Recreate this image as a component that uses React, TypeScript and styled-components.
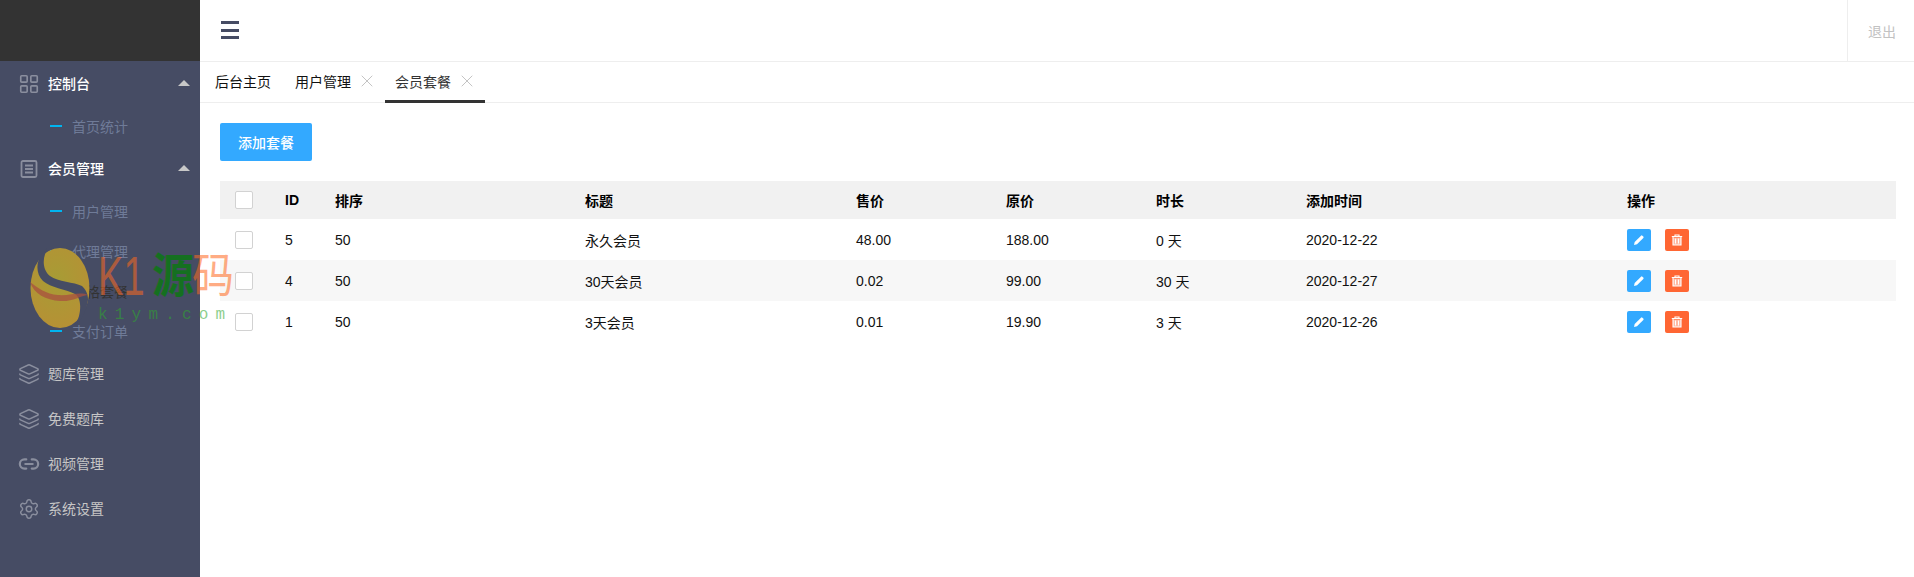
import { ReactNode } from "react";
import styled, { createGlobalStyle } from "styled-components";
import { Layers, LayoutGrid, Link2, Settings, X } from "lucide-react";

const GlobalStyle = createGlobalStyle`
  html, body {
    margin: 0;
    padding: 0;
    background: #fff;
  }
  body {
    font-family: "Liberation Sans", "Noto Sans CJK SC", sans-serif;
    font-size: 14px;
    color: #333;
    overflow: hidden;
  }
`;

const Page = styled.div`
  position: relative;
  display: flex;
  height: 577px;
  overflow: hidden;
`;

const Sidebar = styled.aside`
  width: 200px;
  flex-shrink: 0;
  background: #464c64;
`;

const Logo = styled.div`
  height: 61px;
  background: #333;
`;

const MenuItem = styled.div<{ $open?: boolean }>`
  display: flex;
  align-items: center;
  box-sizing: border-box;
  height: 45px;
  padding: 0 10px 1px 20px;
  color: ${(p) => (p.$open ? "#fff" : "#c6c6c6")};
  font-weight: ${(p) => (p.$open ? 500 : 400)};

  svg {
    width: 22px;
    height: 22px;
    margin: 1px 8px 0 -2px;
    color: #8a8e9e;
    flex-shrink: 0;
  }
`;

const Caret = styled.span`
  margin-left: auto;
  width: 0;
  height: 0;
  border-left: 6px solid transparent;
  border-right: 6px solid transparent;
  border-bottom: 6px solid #c8c8c8;
`;

const SubItem = styled.div<{ $active?: boolean }>`
  display: flex;
  align-items: center;
  box-sizing: border-box;
  height: 40px;
  padding: 0 0 1px 50px;
  color: ${(p) => (p.$active ? "#333" : "#6f7b98")};

  &::before {
    content: "";
    width: 12px;
    height: 2px;
    margin-right: 10px;
    background: #00b4f0;
  }
`;

const Main = styled.main`
  flex: 1;
  min-width: 0;
  display: flex;
  flex-direction: column;
`;

const TopBar = styled.header`
  display: flex;
  align-items: stretch;
  justify-content: space-between;
  height: 61px;
  border-bottom: 1px solid #eee;
`;

const Burger = styled.button`
  display: flex;
  flex-direction: column;
  justify-content: space-between;
  width: 18px;
  height: 18px;
  margin: 21px 0 0 21px;
  padding: 0;
  border: 0;
  background: none;

  span {
    height: 3px;
    background: #464c64;
  }
`;

const Logout = styled.div`
  display: flex;
  align-items: center;
  width: 67px;
  padding-left: 20px;
  box-sizing: border-box;
  border-left: 1px solid #eee;
  color: #c2c2c2;
`;

const Tabs = styled.nav`
  display: flex;
  height: 40px;
  padding-left: 5px;
  border-bottom: 1px solid #eee;
`;

const Tab = styled.div<{ $active?: boolean; $closable?: boolean }>`
  display: flex;
  align-items: center;
  box-sizing: border-box;
  width: ${(p) => (p.$closable ? "100px" : "80px")};
  height: 41px;
  padding-left: 10px;
  color: ${(p) => (p.$active ? "#333" : "#111")};
  border-bottom: 3px solid ${(p) => (p.$active ? "#333" : "transparent")};

  svg {
    width: 20px;
    height: 20px;
    margin-left: 6px;
    color: #c4c4c4;
  }
`;

const Content = styled.section`
  padding: 20px 18px 0 20px;
`;

const AddButton = styled.button`
  display: block;
  width: 92px;
  height: 38px;
  padding: 0;
  border: 0;
  border-radius: 2px;
  background: #33a9ff;
  color: #fff;
  font: inherit;
  font-weight: 500;
`;

const Table = styled.table`
  width: 100%;
  margin-top: 20px;
  border-collapse: collapse;
  table-layout: fixed;
  color: #111;
`;

const HeadCell = styled.th`
  height: 38px;
  padding: 0 15px;
  background: #f1f1f1;
  text-align: left;
  font-weight: 700;
  color: #000;
`;

const Cell = styled.td`
  height: 41px;
  padding: 0 15px;
`;

const Row = styled.tr`
  &:nth-child(even) {
    background: #f7f7f7;
  }
`;

const Check = styled.span`
  display: block;
  box-sizing: border-box;
  width: 18px;
  height: 18px;
  border: 1px solid #d2d2d2;
  border-radius: 2px;
  background: #fff;
`;

const Actions = styled.div`
  display: flex;
  gap: 14px;
`;

const IconButton = styled.button<{ $color: string }>`
  display: flex;
  align-items: center;
  justify-content: center;
  width: 24px;
  height: 22px;
  padding: 0;
  border: 0;
  border-radius: 2px;
  background: ${(p) => p.$color};
`;

const Watermark = styled.div`
  position: absolute;
  left: 30px;
  top: 248px;
  display: flex;
  pointer-events: none;
`;

const WatermarkText = styled.div`
  margin-left: 8px;
  display: flex;
  flex-direction: column;
`;

const Brand = styled.div`
  display: flex;
  align-items: center;
  height: 56px;
  line-height: 1;
`;

const LatinMark = styled.span`
  display: inline-block;
  width: 54px;
  font-size: 56px;
  color: #ff6a20;
  opacity: 0.55;
  transform: scaleX(0.68);
  transform-origin: left center;
`;

const CjkMark = styled.span<{ $color: string; $alpha: number; $bold?: boolean }>`
  width: 40px;
  font-size: 42px;
  font-weight: ${(p) => (p.$bold ? 700 : 400)};
  color: ${(p) => p.$color};
  opacity: ${(p) => p.$alpha};
  transform: scaleY(1.12);
`;

const Domain = styled.div`
  margin-top: 2px;
  font-family: "Liberation Mono", monospace;
  font-size: 16px;
  letter-spacing: 7.2px;
  line-height: 18px;
  color: #2fa82f;
  opacity: 0.55;
  white-space: nowrap;
`;

type Plan = {
  id: number;
  sort: number;
  title: string;
  price: string;
  original: string;
  days: string;
  date: string;
};

const plans: Plan[] = [
  { id: 5, sort: 50, title: "永久会员", price: "48.00", original: "188.00", days: "0 天", date: "2020-12-22" },
  { id: 4, sort: 50, title: "30天会员", price: "0.02", original: "99.00", days: "30 天", date: "2020-12-27" },
  { id: 1, sort: 50, title: "3天会员", price: "0.01", original: "19.90", days: "3 天", date: "2020-12-26" },
];

const columnWidths = [50, 50, 250, 271, 150, 150, 150, 321];
const columns = ["ID", "排序", "标题", "售价", "原价", "时长", "添加时间", "操作"];

function ListIcon() {
  return (
    <svg viewBox="-2 -2 22 22" fill="none" stroke="currentColor" strokeWidth="1.8">
      <rect x="1.5" y="1" width="15" height="16" rx="1.5" />
      <path d="M5 5.500h8M5 9h8M5 12.500h8" />
    </svg>
  );
}

function PencilIcon() {
  return (
    <svg width="12" height="12" viewBox="0 0 12 12" fill="#fff">
      <path d="M1 11l.7-3L8 1.700a1 1 0 0 1 1.400 0l.9.9a1 1 0 0 1 0 1.400L4 10.300z" />
    </svg>
  );
}

function TrashIcon() {
  return (
    <svg width="12" height="12" viewBox="0 0 12 12" fill="none">
      <path d="M.8 2.500h10.400M4 2.200V1h4v1.200" stroke="#fff" strokeWidth="1.100" />
      <path d="M2 3.500h8V11H2z" fill="#fff" opacity="0.55" />
      <path d="M2 3v8h8V3" stroke="#fff" strokeWidth="1.100" />
      <path d="M4.500 4.500v5M7.500 4.500v5" stroke="#fff" />
    </svg>
  );
}

function NavGroup({ icon, label, open, children }: { icon: ReactNode; label: string; open?: boolean; children?: ReactNode }) {
  return (
    <>
      <MenuItem $open={open}>
        {icon}
        {label}
        {open && <Caret />}
      </MenuItem>
      {children}
    </>
  );
}

function WatermarkLogo() {
  return (
    <svg width="60" height="80" viewBox="0 0 60 80">
      <defs>
        <radialGradient id="gold" cx="0.45" cy="0.4" r="0.7">
          <stop offset="0" stopColor="#a79c35" />
          <stop offset="1" stopColor="#b88f35" />
        </radialGradient>
      </defs>
      <ellipse cx="30" cy="40" rx="29.500" ry="40" fill="url(#gold)" />
      <path d="M18 0C6 8 4 24 13 33c8 7 22 8 32 13 6 4 6 14 4 22-1 4-3 7-6 10 8-3 13-14 15-26 0-6-2-10-6-14C44 34 28 34 20 28 12 22 12 9 18 0z" fill="#464c64" />
      <path d="M0 34c8 6 16 12 28 13 12 1 22-4 30 0-8 1-16 7-28 6C16 52 4 46 0 34z" fill="#a8503f" opacity="0.75" />
    </svg>
  );
}

export default function App() {
  return (
    <Page>
      <GlobalStyle />
      <Sidebar>
        <Logo />
        <NavGroup icon={<LayoutGrid strokeWidth={1.8} />} label="控制台" open>
          <SubItem>首页统计</SubItem>
        </NavGroup>
        <NavGroup icon={<ListIcon />} label="会员管理" open>
          <SubItem>用户管理</SubItem>
          <SubItem>代理管理</SubItem>
          <SubItem $active>价格套餐</SubItem>
          <SubItem>支付订单</SubItem>
        </NavGroup>
        <NavGroup icon={<Layers strokeWidth={1.6} />} label="题库管理" />
        <NavGroup icon={<Layers strokeWidth={1.6} />} label="免费题库" />
        <NavGroup icon={<Link2 strokeWidth={2.4} />} label="视频管理" />
        <NavGroup icon={<Settings strokeWidth={1.6} />} label="系统设置" />
      </Sidebar>
      <Main>
        <TopBar>
          <Burger aria-label="menu">
            <span />
            <span />
            <span />
          </Burger>
          <Logout>退出</Logout>
        </TopBar>
        <Tabs>
          <Tab>后台主页</Tab>
          <Tab $closable>
            用户管理
            <X strokeWidth={1.2} />
          </Tab>
          <Tab $closable $active>
            会员套餐
            <X strokeWidth={1.2} />
          </Tab>
        </Tabs>
        <Content>
          <AddButton>添加套餐</AddButton>
          <Table>
            <colgroup>
              {columnWidths.map((w, i) => (
                <col key={i} width={w} />
              ))}
              <col />
            </colgroup>
            <thead>
              <tr>
                <HeadCell>
                  <Check />
                </HeadCell>
                {columns.map((c) => (
                  <HeadCell key={c}>{c}</HeadCell>
                ))}
              </tr>
            </thead>
            <tbody>
              {plans.map((p) => (
                <Row key={p.id}>
                  <Cell>
                    <Check />
                  </Cell>
                  <Cell>{p.id}</Cell>
                  <Cell>{p.sort}</Cell>
                  <Cell>{p.title}</Cell>
                  <Cell>{p.price}</Cell>
                  <Cell>{p.original}</Cell>
                  <Cell>{p.days}</Cell>
                  <Cell>{p.date}</Cell>
                  <Cell>
                    <Actions>
                      <IconButton $color="#33a9ff">
                        <PencilIcon />
                      </IconButton>
                      <IconButton $color="#ff6633">
                        <TrashIcon />
                      </IconButton>
                    </Actions>
                  </Cell>
                </Row>
              ))}
            </tbody>
          </Table>
        </Content>
      </Main>
      <Watermark>
        <WatermarkLogo />
        <WatermarkText>
          <Brand>
            <LatinMark>K1</LatinMark>
            <CjkMark $color="#0a7a10" $alpha={0.8} $bold>
              源
            </CjkMark>
            <CjkMark $color="#ff6a20" $alpha={0.55}>
              码
            </CjkMark>
          </Brand>
          <Domain>k1ym.com</Domain>
        </WatermarkText>
      </Watermark>
    </Page>
  );
}
